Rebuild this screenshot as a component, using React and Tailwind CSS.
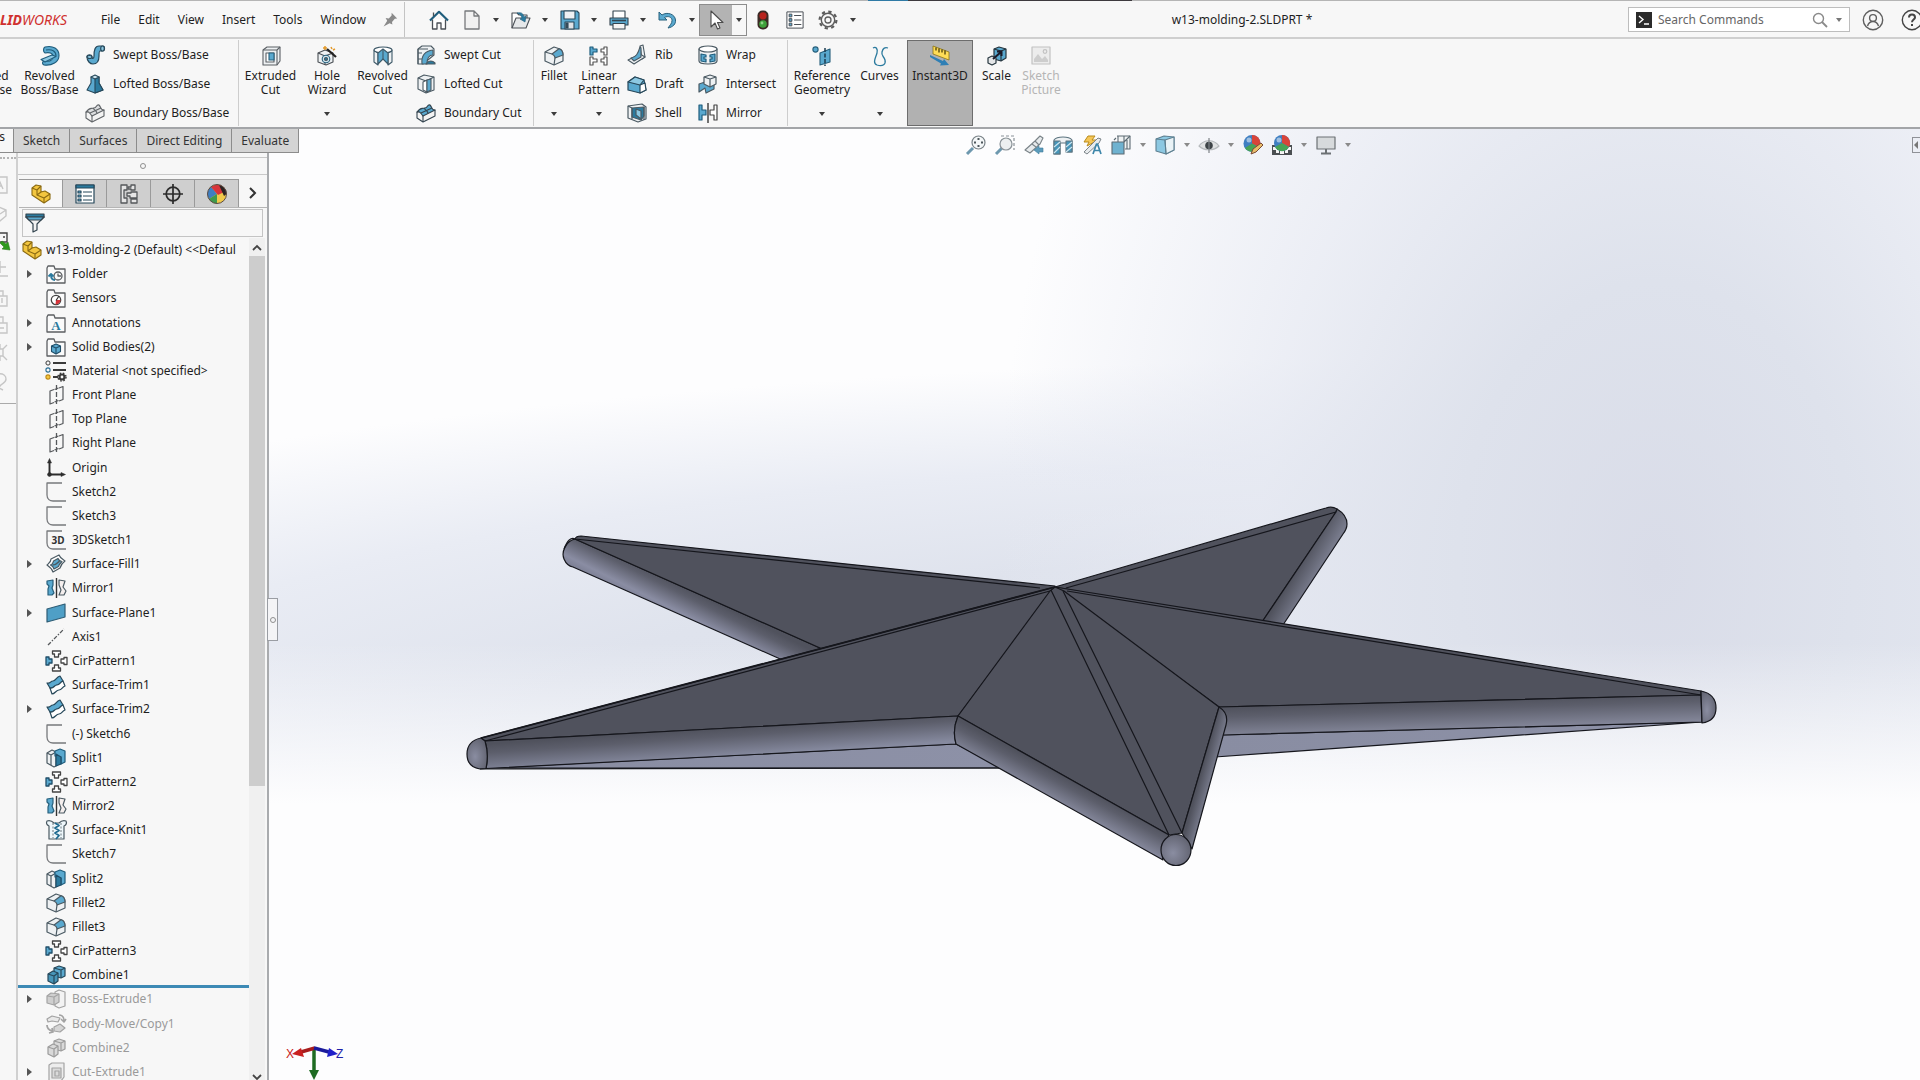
import clsx from "clsx";

const ink = "#4a4f55";
const blue = "#5aa9cf";
const deep = "#2b7a9e";
const pale = "#eef1f3";

// Every glyph is drawn on a 20x20 grid
const glyphs = {
    home: (
        <g fill="none" stroke={ink} strokeWidth="1.3">
            <path d="M3.5 9.5V19h4.5v-6h4v6h4.5V9.5" fill="#fff" />
            <path d="M1 10.5 10 1.8l9 8.7" stroke="#1f5d7c" strokeWidth="2.2" />
            <path d="M4.5 6V2.5" />
        </g>
    ),
    page: <path d="M3 1h9l5 5v13H3zM12 1v5h5" fill="#f1f1f1" stroke="#77797c" strokeWidth="1.3" />,
    open: (
        <g stroke={ink} strokeWidth="1.1">
            <path d="M1 18V3h5l2 2h8v4" fill="#fff" />
            <path d="M1 18 5 8h14l-4 10z" fill="#e6e8ea" />
            <path d="M6 3c4-1 6 0 7 4l2-1-1 6-5-3 2-1c-1-3-2-4-5-5z" fill={deep} stroke="#1f5d7c" strokeWidth=".6" />
        </g>
    ),
    save: (
        <g stroke="#27485a" strokeWidth="1.1">
            <path d="M1 1h16l2 2v16H1z" fill={blue} />
            <path d="M4 1h11v8H4z" fill="#eef1f3" />
            <path d="M5 12h9v7H5z" fill="#dfe3e6" />
            <path d="M6 13h2v5H6z" fill={ink} />
        </g>
    ),
    print: (
        <g stroke="#33444f" strokeWidth="1.1">
            <path d="M4 8V1h12v7" fill="#fff" />
            <path d="M1 8h18v7H1z" fill={blue} />
            <path d="M3 10.5h14" strokeWidth="1.6" />
            <path d="M4 13.5h12V19H4z" fill="#f4f4f4" />
        </g>
    ),
    undo: <path d="M1 2v8h8L6.500 7.500C10 5.500 14 7 14 10.500c0 3-2 4.500-4 7.500 5-1 8-4 7.500-8C17 4 9 1.500 4 5z" fill={blue} stroke="#27607c" strokeWidth="1" />,
    cursor: <path d="M5 1v16l4-4 2.500 6 2.500-1-2.500-5.500H17z" fill="#fff" stroke="#4c4c4c" strokeWidth="1.1" />,
    traffic: (
        <g>
            <rect x="4.500" y=".5" width="11" height="19" rx="5" fill="#3b2a25" />
            <circle cx="10" cy="5.800" r="3.600" fill="#b8231d" />
            <circle cx="10" cy="14" r="3.800" fill="#3fa03a" />
            <circle cx="9" cy="13" r="1.400" fill="#8fd487" />
        </g>
    ),
    options: (
        <g fill={blue} stroke={ink} strokeWidth="1.1">
            <rect x="1" y="1" width="18" height="18" fill="#fff" />
            <path d="M3.500 3.500h3v3h-3zM3.500 8.500h3v3h-3zM3.500 13.500h3v3h-3z" />
            <path d="M9 5h8M9 10h8M9 15h8" />
        </g>
    ),
    gear: (
        <g fill="none" stroke="#5c5c5c">
            <circle cx="10" cy="10" r="3" strokeWidth="1.300" />
            <circle cx="10" cy="10" r="6.700" strokeWidth="1.400" />
            <circle cx="10" cy="10" r="8.400" strokeWidth="2.200" strokeDasharray="3.300 3.300" />
        </g>
    ),
    pin: <path d="M12 1l7 7-3 .5-3.500 4 .5 3-3.500-1.500L2 18l4.500-7-2-3.500 4 .5L12 4.500z" fill="#8a8a8a" />,
    revolved: (
        <g stroke="#1f5d7c" strokeWidth="1.100" fill={blue}>
            <path d="M5 1c8-2 14 2 14 8.500S12 20 4 19c-2-1-2-3 0-4 6 1 9-1 9-4.500S9 6 5 7C3 6 3 2 5 1z" />
            <path d="M1 13.500L12 9l4 1.500L5 16z" fill="#8cc8e2" />
            <path d="M6 4c6-1 10 1 10 6" fill="none" />
        </g>
    ),
    sweep: (
        <g fill={blue} stroke="#27485a" strokeWidth="1.200">
            <path d="M2 12c0-3 5-3 5 0 0 2 2 2 2-1C9 5 10 1 14 1h4c2 0 2 5 0 5h-3c-1 0-1 2-1 5 0 6-3 8-6 8s-6-3-6-7z" />
            <ellipse cx="17.500" cy="3.500" rx="1.800" ry="2.500" fill="#8cc8e2" />
            <ellipse cx="4.500" cy="12" rx="2.500" ry="1.500" fill="#8cc8e2" />
        </g>
    ),
    loft: (
        <g fill={deep} stroke="#27485a" strokeWidth="1.100">
            <path d="M6 3v6L2 16l8 3 8-3-4-7V3z" fill={blue} />
            <path d="M10 5v14l8-3-4-7V3z" />
            <path d="M6 3l4-2 4 2-4 2z" fill="#cfe6f0" />
        </g>
    ),
    boundary: (
        <g fill="#f3f3f3" stroke="#606468" strokeWidth="1.100">
            <path d="M1 9v6l6 4 12-6V7z" />
            <path d="M1 9c3-2 4 2 6 4l12-6c-3 1-3-3-5-5C11 1 12 5 9 5 5 6 5 4 1 9z" fill="#dcdee0" />
            <path d="M7 13v6M5 10l11-5M8 5c1 2 3 2 4 5" fill="none" />
        </g>
    ),
    boundaryCut: (
        <g fill="#f3f3f3" stroke="#33444f" strokeWidth="1.100">
            <path d="M1 9v6l6 4 12-6V7z" />
            <path d="M1 9c3-2 4 2 6 4l12-6c-3 1-3-3-5-5C11 1 12 5 9 5 5 6 5 4 1 9z" fill={blue} />
            <path d="M7 13v6M5 10l11-5M8 5c1 2 3 2 4 5" fill="none" />
        </g>
    ),
    extrudedCut: (
        <g fill={pale} stroke="#5b6065" strokeWidth="1.100">
            <path d="M2 4l4-3h13v14l-3 4H2z" />
            <path d="M2 4h14v15M16 4l3-3" fill="none" />
            <path d="M5 7h8v9H5z" fill="#fff" />
            <path d="M8 7h5v7H8z" fill={blue} stroke="#27607c" />
        </g>
    ),
    holeWizard: (
        <g stroke="#4b5055" strokeWidth="1.100">
            <path d="M1 7l7-3 8 3v9l-7 3-8-3z" fill={pale} />
            <path d="M1 7l7 3 8-3M8 10v9" fill="none" />
            <circle cx="9" cy="13" r="3.800" fill="#cfe6f0" stroke="#27607c" />
            <circle cx="9" cy="13" r="1.500" fill={deep} />
            <path d="M10 3l9 8" stroke="#222" strokeWidth="2.200" />
            <path d="M8 0v4M6 2h4M14 1l1 2M18 3l-2 1" stroke="#e39a2b" strokeWidth="1.500" />
        </g>
    ),
    revolvedCut: (
        <g stroke="#3f5a69" strokeWidth="1.100">
            <path d="M1 4v12l4 3V7zM19 4v12l-4 3V7z" fill={pale} />
            <ellipse cx="10" cy="4" rx="9" ry="3" fill="#fff" />
            <path d="M5 7l5-4 5 4v11l-5-5-5 5z" fill={blue} />
            <path d="M10 3v10" />
        </g>
    ),
    sweptCut: (
        <g stroke="#4b5a63" strokeWidth="1.100">
            <path d="M2 4l4-3h9l3 3v6L7 19H2z" fill={pale} />
            <path d="M6 19C5 10 9 6 17 5v5c-4 0-6 3-6 9z" fill={blue} />
            <path d="M2 4h10M2 4v15M2 8h4M2 14h4" fill="none" />
            <path d="M10 19c1-2 5-5 9-1v1z" fill={deep} />
        </g>
    ),
    loftedCut: (
        <g stroke="#4b5a63" strokeWidth="1.100">
            <path d="M2 4l6-3 10 2v13l-8 3-8-4z" fill={pale} />
            <path d="M2 4l8 3 8-4M10 7v12" fill="none" />
            <path d="M7 8l4-2v12l-4-2z" fill="#fff" />
            <path d="M11 6l4-1v11l-4 2z" fill={blue} />
        </g>
    ),
    fillet: (
        <g stroke="#4b5a63" strokeWidth="1.200">
            <path d="M1 6l9-5 6 2c2 1 3 3 3 6v6l-9 4-9-4z" fill={pale} />
            <path d="M8 8l7-5.300c3 1 4 3 4 6.300l-8 3c0-2-1-3-3-4z" fill={blue} />
            <path d="M1 6l7 2M11 12l-1 7" fill="none" />
        </g>
    ),
    linear: (
        <g fill="#fff" stroke="#555" strokeWidth="1.200">
            <path d="M1 1h3v2h4v3H4v3H1z" fill={blue} stroke="#1f5d7c" />
            <path d="M18 1h-3v2h-3v3h3v3h3zM1 11h3v2h4v3H4v3H1zM18 11h-3v2h-3v3h3v3h3z" />
        </g>
    ),
    rib: (
        <g stroke="#4b5a63" strokeWidth="1.100">
            <path d="M13 1l3-1 2 12-3 2z" fill={pale} />
            <path d="M1 15l12-6 5 3-11 7z" fill={pale} />
            <path d="M4 13C9 12 11 9 13 2l1 1v9l-7 4z" fill={blue} />
        </g>
    ),
    draft: (
        <g stroke="#27485a" strokeWidth="1.200">
            <path d="M1 8l7-5 9 3 2 10-6 3-12-3z" fill={blue} />
            <path d="M13 11l5-2 1 7-6 3z" fill="#fff" />
            <path d="M1 8l7-5 9 3-4 5z" fill="#8cc8e2" />
        </g>
    ),
    shell: (
        <g stroke="#4b5a63" strokeWidth="1.200">
            <path d="M1 3l14-2 4 3v12l-8 3-10-4z" fill={pale} />
            <path d="M5 5l12-1v9l-3 4-9-3z" fill="#2b7a9e" />
            <path d="M9 6l5 2v8l-5-4z" fill="#8cc8e2" />
            <path d="M1 3l4 2v11M17 4v13" fill="none" />
        </g>
    ),
    wrap: (
        <g stroke="#4b5a63" strokeWidth="1.200">
            <path d="M1 4v12c0 4 18 4 18 0V4z" fill={pale} />
            <ellipse cx="10" cy="4" rx="9" ry="3" fill="#fff" />
            <path d="M3 9l5 1v2H6v2h2v3l-5-1zM17 9l-5 1v2h2v2h-2v3l5-1z" fill={blue} stroke="#1f5d7c" />
        </g>
    ),
    intersect: (
        <g stroke="#4b5a63" strokeWidth="1.200">
            <path d="M1 10l6-2 9 2v5l-8 4-1-5-6 4z" fill={blue} />
            <path d="M6 3l6-2 6 2v7l-6 3-6-3z" fill={pale} />
            <path d="M6 3l6 2 6-2M12 5v8" fill="none" />
        </g>
    ),
    mirror: (
        <g stroke="#444" strokeWidth="1.200">
            <path d="M1 2h3v5h4v5H4v5H1z" fill={blue} stroke="#1f5d7c" />
            <path d="M19 2h-3v5h-4v5h4v5h3z" fill="#fff" />
            <path d="M10 0v20" strokeWidth="1.500" />
        </g>
    ),
    refGeometry: (
        <g stroke="#27607c" strokeWidth="1.100">
            <circle cx="3.500" cy="3.500" r="2.600" fill={blue} />
            <path d="M8 7l10-4v13L8 19z" fill={blue} />
            <path d="M13 2v18" stroke="#1d3d50" strokeWidth="1.500" strokeDasharray="4 1.500" />
        </g>
    ),
    curves: <path d="M3 2c3-2 5 1 4 5s-5 10 0 12c6 2 9-1 8-5s-4-4-3-8 3-5 6-4" fill="none" stroke={deep} strokeWidth="1.300" />,
    instant: (
        <g>
            <path d="M3 0l16 6v8L3 8z" fill="#ffdd57" stroke="#8b7414" strokeWidth=".8" />
            <path d="M6 1.500v3M9 2.500v4M12 3.500v3M15 4.500v4" stroke="#3a3000" strokeWidth="1.200" />
            <path d="M0 9l13 6 1-2 5 6-9 .5 1-2L0 11z" fill="#2f7fb5" />
        </g>
    ),
    scale: (
        <g stroke="#27363f" strokeWidth="1.200">
            <path d="M7 3l5-2 7 2v9l-5 3-7-2z" fill={blue} />
            <path d="M7 3l7 2 5-2M14 5v10" fill="none" />
            <path d="M1 12l4-2 4 2v5l-4 2-4-2z" fill="#e4e6e8" />
            <path d="M6 13l8-7M10 5.500h4.500V10" stroke="#1b1b2a" strokeWidth="2" fill="none" />
        </g>
    ),
    picture: (
        <g fill="none" stroke="#c2c2c2" strokeWidth="1.200">
            <path d="M1 1h18v17H1z" fill="#ececec" />
            <path d="M3 13l4-5 4 5 3-3 3 4v2H3z" fill="#cdcdcd" stroke="none" />
            <circle cx="14" cy="5.500" r="1.800" />
        </g>
    ),
    zoomFit: (
        <g stroke="#7a8388" strokeWidth="1.200">
            <path d="M1 19l6-6" stroke="#6d98ae" strokeWidth="3" />
            <circle cx="12.500" cy="7.500" r="6.500" fill="#f4f7f8" />
            <path d="M12.500 3v2M12.500 10v2M8 7.500h2M15 7.500h2" strokeWidth="2" stroke="#4d565b" />
        </g>
    ),
    zoomArea: (
        <g stroke="#8a9297" strokeWidth="1.200">
            <path d="M6 1h13v14" fill="none" strokeDasharray="3 2" />
            <path d="M1 19l6-6" stroke="#6d98ae" strokeWidth="3" />
            <circle cx="11" cy="9" r="6" fill="#eceff0" />
        </g>
    ),
    prevView: (
        <g stroke="#7a8388" strokeWidth="1.100">
            <path d="M1 15l10-9 5-5 3 2-3 6-10 9z" fill="#e8ebed" />
            <path d="M11 6l4 4M8 9l4 3" />
            <path d="M19 13h-4v-2l-5 4 5 4v-2h4z" fill="#5b9bbb" stroke="#3f7d9c" strokeWidth=".6" />
        </g>
    ),
    section: (
        <g stroke="#5d7580" strokeWidth="1.100">
            <path d="M1 5c3-4 15-4 18 0v12h-5V8H7v11H1z" fill="#eef1f3" />
            <path d="M1 6h6v13H1zM13 6h6v11h-6z" fill="#4795b8" />
            <path d="M1 12l6-5M1 18l6-6M13 12l6-5M13 17l6-5" stroke="#cfe6f0" />
        </g>
    ),
    dynamic: (
        <g stroke="#7d858a" strokeWidth="1">
            <path d="M6 1h7l-3 4h6L5 11l2-4H2z" fill="#f5c657" stroke="#b98b1c" />
            <path d="M2 17L16 3l3 1-2 4L5 19z" fill="#e8ebed" />
            <path d="M11 19l3.500-10h1L19 19M12.500 15.500h5" fill="none" stroke="#3d86aa" strokeWidth="1.700" />
        </g>
    ),
    orient: (
        <g stroke="#5d6b73" strokeWidth="1.100">
            <path d="M6 1h13v13h-5" fill="#f0f3f4" />
            <path d="M1 7h12v12H1z" fill="#6fb2d0" />
            <path d="M13 7l6-6M13 1v6M16 14v-9M7 1v6M3 5l2-2" fill="none" />
        </g>
    ),
    display: (
        <g stroke="#5d7f90" strokeWidth="1.100">
            <path d="M1 4l8-3 10 1v13l-8 4-10-3z" fill="#8cc8e2" />
            <path d="M10 5l9-3v13l-8 4z" fill="#e9f2f6" />
            <path d="M1 4l9 1 1 14" fill="none" />
        </g>
    ),
    eye: (
        <g>
            <path d="M0 11C5 4 15 4 20 11 15 16 5 16 0 11z" fill="#e0e2e3" stroke="#b5b9bc" strokeWidth="1.200" />
            <circle cx="10" cy="10.500" r="3.800" fill="#3e4448" />
            <path d="M10 3v15" stroke="#7d8286" strokeWidth="1.200" />
        </g>
    ),
    appearance: (
        <g>
            <circle cx="9" cy="8.500" r="8.500" fill="#3f7fc1" />
            <path d="M9 8.500L9 0a8.500 8.500 0 0 1 7.500 12.500z" fill="#d8443a" />
            <path d="M9 8.500l7.500 4A8.500 8.500 0 0 1 2 13z" fill="#48a356" />
            <circle cx="6" cy="5" r="2.500" fill="#ffffff" opacity=".5" />
            <path d="M8 19l2-5 8-6 2 2-7 7z" fill="#e9bd6a" stroke="#7a4a33" strokeWidth="1" />
        </g>
    ),
    scene: (
        <g>
            <path d="M0 10h20v10H0z" fill="#4b4f52" />
            <path d="M1 12h4v3H1zM8 16h4v3H8zM15 12h4v3h-4zM4 15h3v3H4zM13 15h3v3h-3z" fill="#f4f4f4" />
            <circle cx="10" cy="8" r="8" fill="#3f7fc1" />
            <path d="M10 8V0a8 8 0 0 1 7 12z" fill="#d8443a" />
            <path d="M10 8l7 4a8 8 0 0 1-14 0z" fill="#48a356" />
            <circle cx="7" cy="5" r="2.500" fill="#fff" opacity=".5" />
        </g>
    ),
    monitor: (
        <g stroke="#6c7174" strokeWidth="1.200">
            <path d="M1 2h18v12H1z" fill="#d7dadc" />
            <path d="M10 14v4M5 18.500h10" strokeWidth="2" />
        </g>
    ),
    part: (
        <g fill="#f3c63f" stroke="#8a6a12" strokeWidth="1.100">
            <path d="M1 4l4-3 5 1v6l4-1 5 3v5l-6 4-12-8z" />
            <path d="M1 4l5 2 4-4M6 6v5l7 3 6-4M13 14v5M10 8l-4 3" fill="none" />
        </g>
    ),
    property: (
        <g stroke="#27485a" strokeWidth="1.200">
            <path d="M1 1h18v18H1z" fill="#fff" />
            <path d="M1 1h18v3H1z" fill={deep} />
            <path d="M3 7h3v2H3zM3 11h3v2H3zM3 15h3v2H3z" fill={blue} />
            <path d="M8 8h9M8 12h9M8 16h9" />
        </g>
    ),
    config: (
        <g fill="#e6e6e6" stroke="#55585b" strokeWidth="1.300">
            <path d="M2 1h6v5H5v8h3v5H2z" />
            <path d="M9 3h3V1h4v5h-4V5H9zM8 9h4V8h6v6h-7v-2H8zM12 15h6v4h-6z" />
        </g>
    ),
    target: (
        <g fill="none" stroke="#2c2c2c" strokeWidth="1.700">
            <circle cx="10" cy="10" r="6.800" />
            <path d="M10 0v20M0 10h20" />
        </g>
    ),
    ball: (
        <g>
            <circle cx="10" cy="10" r="9.500" fill="#f0c94a" />
            <path d="M10 10L2 15A9.500 9.500 0 0 1 4 2.500z" fill="#3f7fc1" />
            <path d="M10 10L2 15a9.500 9.500 0 0 0 8 4.500z" fill="#3e9a4c" />
            <path d="M11 11L4 3C9-1 16 0 19 7z" fill="#d8343a" />
            <path d="M12 1c5 1 8 5 7.500 9L17 12z" fill="#2b2323" />
            <circle cx="10" cy="10" r="9.500" fill="none" stroke="#5a4a44" />
        </g>
    ),
    funnel: (
        <g stroke="#33444f" strokeWidth="1.200">
            <path d="M1 4l7 7v8l4-2v-6l7-7z" fill="#f2f2f2" />
            <path d="M1 1h18v3H1z" fill={deep} />
            <path d="M1 4h18l-3 3H4z" fill={blue} />
        </g>
    ),
    folder: <path d="M1 19V4l1-2h6l1 3h10v14z" fill="#fafafa" stroke="#5c5f62" strokeWidth="1.300" />,
    history: (
        <g fill="none" stroke={deep} strokeWidth="1.300">
            <circle cx="12" cy="12" r="4" stroke="#5c5f62" />
            <path d="M12 9.500V12h3" stroke="#5c5f62" />
            <path d="M9 16c-3 0-4-2-4-5M2.500 12.500L5 10l2.500 2.500" strokeWidth="1.800" />
        </g>
    ),
    sensor: (
        <g>
            <circle cx="10" cy="12" r="4.700" fill="#fff" stroke="#444" strokeWidth="1.300" />
            <path d="M10 12h4.500a4.500 4.500 0 0 1-5 4.500z" fill="#d8343a" />
            <path d="M10 12.500l3-4.500" stroke="#333" strokeWidth="1.200" />
        </g>
    ),
    bodies: (
        <g fill={blue} stroke="#1f4d68" strokeWidth="1.100">
            <path d="M5.500 9L10 7l4.500 2v5.500L10 17l-4.500-2.500z" />
            <path d="M5.500 9l4.500 2 4.500-2M10 11v6" fill="none" />
        </g>
    ),
    material: (
        <g fill="none" stroke="#3a3a3a" strokeWidth="1.500">
            <path d="M7 2h13M7 9h13M7 16h5" strokeWidth="1.800" />
            <circle cx="2" cy="2" r="2.100" strokeWidth="1" />
            <circle cx="2" cy="9" r="2.100" strokeWidth="1.100" stroke="#2b6f96" />
            <circle cx="2" cy="16" r="2.100" strokeWidth="1.100" stroke="#c08a14" fill="#f3c63f" />
            <circle cx="16" cy="16" r="2.500" strokeWidth="2.200" />
            <circle cx="16" cy="16" r="4" strokeWidth="1.400" strokeDasharray="1.600 1.600" />
        </g>
    ),
    plane: (
        <g fill="none" stroke="#55585b" strokeWidth="1.200">
            <path d="M8 4.500l-4 1.500v13l4-1.500M13 3l4-1.500v13L13 16" />
            <path d="M10.500 0v5M10.500 7v5M10.500 14v5M8.500 4.500l4-1.500M8.500 17l4-1.500" strokeWidth="1.300" />
        </g>
    ),
    origin: (
        <g stroke="#2c2c2c" fill="#2c2c2c">
            <path d="M3.500 4v12.500H16" fill="none" strokeWidth="1.900" />
            <path d="M1.500 5l2-4.500 2 4.500zM15 14.500l4.500 2-4.500 2z" strokeWidth=".5" />
            <circle cx="3.500" cy="16.500" r="1.800" />
        </g>
    ),
    sketch: <path d="M16 1H1v12c0 4 3 6 6 6h13" fill="none" stroke="#77797c" strokeWidth="1.300" />,
    fill: (
        <g stroke="#4b5a63" strokeWidth="1.200">
            <path d="M1 11c2-2 4-3 4-6l8-4c1 3 3 4 6 6-3 2-4 4-5 7l-7 4c-1-3-3-5-6-7z" fill="#fff" />
            <path d="M4.500 11C7 10 7 9 7.500 7l4.500-2.500c1 2 2 3 4 3-2 2-3 3-3.500 5L8 15c-.5-2-1.500-3-3.500-4z" fill={blue} />
            <path d="M6.500 11c4 0 5-2 7-4" fill="none" strokeWidth="1.500" />
        </g>
    ),
    mirrorBody: (
        <g stroke="#4b5a63" strokeWidth="1.200">
            <path d="M1 3l6-1v5l-1 3 2 5-2 2H2v-6l1-3-2-2z" fill={blue} stroke="#27607c" />
            <path d="M13 2l6 1-1 3-1 3 3 4-2 4h-5l2-5-2-5z" fill="#f5efee" />
            <path d="M10.500 0v20" stroke="#333" strokeWidth="1.400" />
        </g>
    ),
    surface: <path d="M1 6l18-5v13L1 19z" fill="#4f9fc6" stroke="#2f5d75" strokeWidth="1.200" />,
    axis: <path d="M2 18L18 2" fill="none" stroke="#55585b" strokeWidth="1.300" strokeDasharray="4 1.500 1.500 1.500" />,
    circular: (
        <g fill="#fff" stroke="#444" strokeWidth="1.300">
            <path d="M6.500 0h8v3h-2v3h-4V3h-2zM6.500 20h8v-3h-2v-3h-4v3h-2zM21 6.500h-3v1.500h-3v4h3v1.500h3z" />
            <path d="M0 6h3v2h3v4H3v2H0z" fill={blue} stroke="#1f4d68" />
        </g>
    ),
    trim: (
        <g stroke="#27485a" strokeWidth="1.200">
            <path d="M1 8c4 1 3-2 6-2s3-4 7-5l3 5c-3 1-3 4-6 4s-4 4-7 3z" fill={blue} />
            <path d="M4 13c4 1 4-3 7-3s3-3 6-4l2 5c-3 1-3 4-6 4s-4 4-7 4z" fill="#fff" />
        </g>
    ),
    split: (
        <g stroke="#4b5a63" strokeWidth="1.200">
            <path d="M1 5l5-3 4 2v14l-2 1-7-4z" fill={pale} />
            <path d="M1 5l4 2v10M5 7l5-3" fill="none" />
            <path d="M9 3l5-2 5 2v11l-4 2V9l-6-1z" fill={blue} stroke="#1f5d7c" />
            <path d="M10 6l5 3v7l-5 2z" fill={deep} stroke="#1f4d68" />
        </g>
    ),
    knit: (
        <g stroke="#4b5a63" strokeWidth="1.200">
            <path d="M1 1c3-1 5 0 7 2h5c2-2 4-3 7-2 1 2 0 4-2 5v13H3V6C1 5 0 3 1 1z" fill="#eef7fb" />
            <path d="M9 3l4 2.500L9 8l4 2.500L9 13l4 2.500L10 19" fill="none" stroke="#1f6b90" strokeWidth="1.800" />
            <path d="M7 3v15M15 3v15" strokeDasharray="2 1.500" strokeWidth=".8" />
        </g>
    ),
    combine: (
        <g fill={blue} stroke="#27485a" strokeWidth="1.200">
            <path d="M8 3l5-2 6 2v8l-4 2-7-2z" />
            <path d="M2 9l5-3 5 2v8l-4 3-6-3z" fill="#4795b8" />
            <path d="M2 9l6 2 4-3M8 11v8M8 3l7 2 4-2M15 5v8" fill="none" />
        </g>
    ),
    extrudeOff: (
        <g fill="#e4e4e4" stroke="#a3a3a3" strokeWidth="1.200">
            <path d="M9 3l4-2 6 2v14l-6 2-4-2z" fill="#f3f3f3" />
            <path d="M1 7l4-3 8 1v8l-5 3-7-2z" fill="#cfcfcf" />
            <path d="M1 7l7 1 5-3M8 8v8" fill="none" />
        </g>
    ),
    moveOff: (
        <g fill="#e9e9e9" stroke="#a3a3a3" strokeWidth="1.200">
            <path d="M1 5l5-3 8 2-2 4-6-1-4 1z" />
            <path d="M13 1c3 0 5 2 5 6M15 5l3 3 2-3" fill="none" strokeWidth="1.600" />
            <path d="M8 13l6-3 5 4-5 4-6-1z" fill="#d5d5d5" />
            <path d="M1 11c0 3 2 5 5 6M3 19l4-1-1-4" fill="none" strokeWidth="1.800" />
        </g>
    ),
    combineOff: (
        <g fill="#d9d9d9" stroke="#9c9c9c" strokeWidth="1.200">
            <path d="M8 3l5-2 6 2v8l-4 2-7-2z" />
            <path d="M2 9l5-3 5 2v8l-4 3-6-3z" />
            <path d="M2 9l6 2 4-3M8 11v8M8 3l7 2 4-2M15 5v8" fill="none" />
        </g>
    ),
    cutOff: (
        <g fill="#ededed" stroke="#a3a3a3" strokeWidth="1.200">
            <path d="M3 3l3-2h12v14l-3 4H3z" />
            <path d="M6 6h9v10H6zM9 9h4v5H9z" fill="#dadada" />
        </g>
    ),
    stamp: <path d="M1 2h16v16H1zM5 14l4-9 4 9M6 11h6" />,
    spray: <path d="M2 8l7-4 7 3v6l-6 5-8-3zM9 4v6M16 7l-6 4" />,
    stampPlus: <path d="M10 2v12M4 8h12M1 17h17" />,
    clip: <path d="M5 9V4h8v5M7 9h10v10H7zM12 11v5" />,
    tray: <path d="M4 8V2h9v6M1 8h16v10H1zM5 13h9" />,
    nodes: <path d="M6 6h7v7H6zM2 2l4 4M17 2l-4 4M2 17l4-4M17 17l-4-4M10 1v5M10 13v5" />,
    loop: <path d="M4 8c0-7 12-7 12 0 0 5-6 4-7 9M9 17l-4-3M9 17l4 2" />,
};

const Icon = ({ name, className = "size-5" }) => (
    <svg viewBox="0 0 20 20" className={clsx("shrink-0 overflow-visible", className)} strokeLinejoin="round" aria-hidden="true">
        {glyphs[name]}
    </svg>
);

const Caret = ({ className = "text-[#3c3c3c]" }) => (
    <svg viewBox="0 0 6 4" className={clsx("h-1 w-[6px] shrink-0", className)} aria-hidden="true">
        <path d="M0 0h6L3 4z" fill="currentColor" />
    </svg>
);

const menus = ["File", "Edit", "View", "Insert", "Tools", "Window"];

const TitleBar = () => (
    <header className="relative flex h-[39px] shrink-0 items-center border-t border-b-2 border-t-[#b5b5b5] border-b-[#cfcfcf] bg-[#f7f7f7] pt-px">
        <div className="absolute -top-px left-[868px] flex h-px w-[264px] bg-[#3d3a3e]">
            <div className="w-10 bg-[#2f7aa5]"></div>
        </div>
        <div className="flex w-[67px] shrink-0 justify-end overflow-hidden text-sm text-[#d0312f] italic">
            <span className="font-bold">SOLID</span>
            <span>WORKS</span>
        </div>
        <nav className="ml-[34px] flex items-center gap-[18px]">
            {menus.map((item) => (
                <button key={item} type="button">{item}</button>
            ))}
        </nav>
        <button type="button" aria-label="Pin menu" className="ml-4"><Icon name="pin" className="size-4" /></button>
        <div className="ml-1.5 h-full w-px bg-[#c4c4c4]"></div>

        {/* Quick access tools */}
        <div className="ml-6 flex h-full items-center">
            <button type="button" aria-label="Home" className="mr-[13px]"><Icon name="home" /></button>
            {[["page", "New"], ["open", "Open"], ["save", "Save"], ["print", "Print"], ["undo", "Undo"]].map(([icon, label]) => (
                <button key={icon} type="button" aria-label={label} className="mr-3 flex items-center gap-[11px]">
                    <Icon name={icon} />
                    <Caret />
                </button>
            ))}
            <div className="-ml-2 flex h-8 border border-[#8c8c8c]">
                <button type="button" aria-label="Select" className="flex w-8 items-center justify-center bg-[#b3b3b3]"><Icon name="cursor" /></button>
                <button type="button" aria-label="Select options" className="flex w-3.5 items-center justify-center"><Caret /></button>
            </div>
            <button type="button" aria-label="Rebuild" className="ml-1.5"><Icon name="traffic" /></button>
            <button type="button" aria-label="File properties" className="ml-[13px]"><Icon name="options" className="size-[18px]" /></button>
            <button type="button" aria-label="Options" className="ml-[14px] flex items-center gap-[12px]">
                <Icon name="gear" />
                <Caret />
            </button>
        </div>

        <div className="flex-1 text-center">w13-molding-2.SLDPRT *</div>

        <div className="flex h-[25px] w-[222px] shrink-0 items-center border border-[#bdbdbd] bg-white px-[7px]">
            <svg viewBox="0 0 16 16" className="size-4 shrink-0" aria-hidden="true">
                <path d="M0 0h16v16H0z" fill="#2b2b2b" />
                <path d="M3 4l4 3.500L3 11M8 12h5" fill="none" stroke="#fff" strokeWidth="1.400" />
            </svg>
            <input aria-label="Search Commands" placeholder="Search Commands" className="ml-1.5 w-0 flex-1 bg-transparent outline-none placeholder:text-[#666]" />
            <button type="button" aria-label="Search" className="flex items-center gap-2">
                <svg viewBox="0 0 16 16" className="size-4" fill="none" stroke="#8a8a8a" strokeWidth="1.400" aria-hidden="true">
                    <circle cx="6.500" cy="6.500" r="5" />
                    <path d="M10 10l5 5" strokeWidth="1.800" />
                </svg>
                <Caret className="text-[#777]" />
            </button>
        </div>
        <button type="button" aria-label="Account" className="ml-3 shrink-0">
            <svg viewBox="0 0 22 22" className="size-[22px]" fill="none" stroke="#5f5f5f" strokeWidth="1.400" aria-hidden="true">
                <circle cx="11" cy="11" r="9.700" />
                <circle cx="11" cy="9" r="3.400" />
                <path d="M5.500 17c1-3 3-4.500 5.500-4.500s4.500 1.500 5.500 4.500" />
            </svg>
        </button>
        <button type="button" aria-label="Help" className="-mr-[3px] ml-[17px] shrink-0">
            <svg viewBox="0 0 22 22" className="size-[22px]" fill="none" stroke="#444" strokeWidth="1.400" aria-hidden="true">
                <circle cx="11" cy="11" r="9.700" />
                <path d="M8 8.500c0-4 6-4 6 0 0 2-3 2.300-3 4.800M11 15v2" strokeWidth="2" />
            </svg>
        </button>
    </header>
);

const BigButton = ({ icon, label, className, drop, active, disabled }) => (
    <button
        type="button"
        disabled={disabled}
        aria-pressed={active}
        className={clsx(
            "flex shrink-0 flex-col items-center border pt-[5px] leading-[14px]",
            active ? "border-[#6d6d6d] bg-[#b1b1b1]" : "border-transparent",
            disabled && "text-[#b5b5b5]",
            className
        )}
    >
        <Icon name={icon} />
        <span className="mt-[3px] h-[28px] text-center whitespace-pre">{label}</span>
        {drop && <span className="mt-[15px]"><Caret /></span>}
    </button>
);

const SmallButtons = ({ items, className }) => (
    <div className={clsx("flex shrink-0 flex-col", className)}>
        {items.map(([icon, label]) => (
            <button key={label} type="button" className="flex h-[29px] items-center gap-2 whitespace-nowrap">
                <Icon name={icon} />
                {label}
            </button>
        ))}
    </div>
);

const Divider = () => <div className="h-[86px] w-px shrink-0 bg-[#cdcdcd]"></div>;

const Ribbon = () => (
    <div className="flex h-[90px] shrink-0 border-b-2 border-[#a3a5a8] bg-[#f7f7f7] pt-px">
        <div className="flex w-[17px] shrink-0 justify-end pr-[7px]">
            <BigButton icon="revolved" label={"Extruded\nBoss/Base"} className="w-[54px]" />
        </div>
        <BigButton icon="revolved" label={"Revolved\nBoss/Base"} className="w-[65px]" />
        <SmallButtons
            className="ml-[3px] w-[153px]"
            items={[["sweep", "Swept Boss/Base"], ["loft", "Lofted Boss/Base"], ["boundary", "Boundary Boss/Base"]]}
        />
        <Divider />
        <BigButton icon="extrudedCut" label={"Extruded\nCut"} className="w-[63px]" />
        <BigButton icon="holeWizard" label={"Hole\nWizard"} drop className="w-[50px]" />
        <BigButton icon="revolvedCut" label={"Revolved\nCut"} className="w-[61px]" />
        <SmallButtons
            className="ml-[3px] w-[117px]"
            items={[["sweptCut", "Swept Cut"], ["loftedCut", "Lofted Cut"], ["boundaryCut", "Boundary Cut"]]}
        />
        <Divider />
        <BigButton icon="fillet" label={"Fillet\n "} drop className="w-[40px]" />
        <BigButton icon="linear" label={"Linear\nPattern"} drop className="w-[50px]" />
        <SmallButtons className="ml-[3px] w-[71px]" items={[["rib", "Rib"], ["draft", "Draft"], ["shell", "Shell"]]} />
        <SmallButtons className="w-[89px]" items={[["wrap", "Wrap"], ["intersect", "Intersect"], ["mirror", "Mirror"]]} />
        <Divider />
        <BigButton icon="refGeometry" label={"Reference\nGeometry"} drop className="w-[68px]" />
        <BigButton icon="curves" label={"Curves\n "} drop className="w-[47px]" />
        <BigButton icon="instant" label="Instant3D" active className="ml-[4px] h-[86px] w-[66px]" />
        <BigButton icon="scale" label="Scale" className="ml-[2px] w-[43px]" />
        <BigButton icon="picture" label={"Sketch\nPicture"} disabled className="w-[46px]" />
    </div>
);

const FeatureTabs = () => (
    <div className="flex h-[24px] border-b border-[#8c8c8c]">
        <button type="button" className="flex w-[14px] shrink-0 justify-end overflow-hidden border-r border-[#8c8c8c] bg-[#f7f7f7] pr-2">Features</button>
        {["Sketch", "Surfaces", "Direct Editing", "Evaluate"].map((tab) => (
            <button key={tab} type="button" className="border-r border-[#8c8c8c] bg-[#d4d4d4] px-[9px] text-[#333]">
                {tab}
            </button>
        ))}
    </div>
);

const tree = [
    { icon: "folder", over: "history", label: "Folder", open: true },
    { icon: "folder", over: "sensor", label: "Sensors" },
    { icon: "folder", letter: true, label: "Annotations", open: true },
    { icon: "folder", over: "bodies", label: "Solid Bodies(2)", open: true },
    { icon: "material", label: "Material <not specified>" },
    { icon: "plane", label: "Front Plane" },
    { icon: "plane", label: "Top Plane" },
    { icon: "plane", label: "Right Plane" },
    { icon: "origin", label: "Origin" },
    { icon: "sketch", label: "Sketch2" },
    { icon: "sketch", label: "Sketch3" },
    { icon: "sketch", threeD: true, label: "3DSketch1" },
    { icon: "fill", label: "Surface-Fill1", open: true },
    { icon: "mirrorBody", label: "Mirror1" },
    { icon: "surface", label: "Surface-Plane1", open: true },
    { icon: "axis", label: "Axis1" },
    { icon: "circular", label: "CirPattern1" },
    { icon: "trim", label: "Surface-Trim1" },
    { icon: "trim", label: "Surface-Trim2", open: true },
    { icon: "sketch", label: "(-) Sketch6" },
    { icon: "split", label: "Split1" },
    { icon: "circular", label: "CirPattern2" },
    { icon: "mirrorBody", label: "Mirror2" },
    { icon: "knit", label: "Surface-Knit1" },
    { icon: "sketch", label: "Sketch7" },
    { icon: "split", label: "Split2" },
    { icon: "fillet", label: "Fillet2" },
    { icon: "fillet", label: "Fillet3" },
    { icon: "circular", label: "CirPattern3" },
    { icon: "combine", label: "Combine1", rollback: true },
    { icon: "extrudeOff", label: "Boss-Extrude1", open: true, off: true },
    { icon: "moveOff", label: "Body-Move/Copy1", off: true },
    { icon: "combineOff", label: "Combine2", off: true },
    { icon: "cutOff", label: "Cut-Extrude1", open: true, off: true },
];

const TreeIcon = ({ item }) => (
    <svg viewBox="0 0 20 20" className="size-5 shrink-0 overflow-visible" strokeLinejoin="round" aria-hidden="true">
        {glyphs[item.icon]}
        {item.over && glyphs[item.over]}
        {item.letter && <text x="10" y="17" textAnchor="middle" fontSize="13" fontWeight="bold" fontFamily="Liberation Serif, serif" fill="#2b7a9e">A</text>}
        {item.threeD && <text x="12" y="14" textAnchor="middle" fontSize="10" fontWeight="bold" fontFamily="Noto Sans, sans-serif" fill="#333">3D</text>}
    </svg>
);

const TreeItem = ({ item }) => (
    <li className={clsx("relative flex min-h-0 items-center pl-[9px]", item.off && "text-[#9a9a9a]")}>
        <span className="flex w-[19px] shrink-0">
            {item.open && (
                <svg viewBox="0 0 5 8" className="h-2 w-[5px]" aria-hidden="true"><path d="M0 0l5 4-5 4z" fill="#555" /></svg>
            )}
        </span>
        <TreeIcon item={item} />
        <span className="ml-1.5 whitespace-nowrap">{item.label}</span>
        {item.rollback && <span className="absolute inset-x-0 -bottom-px h-[3px] bg-[#3d8ab5]"></span>}
    </li>
);

const panelTabs = [["part", "Feature tree"], ["property", "Properties"], ["config", "Configurations"], ["target", "Dimensions"], ["ball", "Display"]];

const SidePanel = () => (
    <aside className="flex w-[253px] shrink-0 flex-col border-r-2 border-l-2 border-r-[#a9abae] border-l-[#d0d0d0] bg-[#f7f7f7]">
        <div className="mt-[4px] flex h-[18px] shrink-0 items-center justify-center border-y border-[#c9c9c9]">
            <span className="size-[6px] rounded-full border border-[#8f8f8f]"></span>
        </div>
        <div className="mt-1 ml-px flex h-[29px] shrink-0 items-stretch border-b border-[#b5b5b5]">
            {panelTabs.map(([icon, label], i) => (
                <button
                    key={icon}
                    type="button"
                    aria-label={label}
                    className={clsx(
                        "flex w-[44px] items-center justify-center border-t border-r border-[#9a9a9a]",
                        i > 0 && "bg-[#cfcfcf]"
                    )}
                >
                    <Icon name={icon} />
                </button>
            ))}
            <button type="button" aria-label="More tabs" className="flex flex-1 items-center justify-center">
                <svg viewBox="0 0 8 12" className="h-3 w-2" fill="none" stroke="#333" strokeWidth="2" aria-hidden="true"><path d="M1 1l5 5-5 5" /></svg>
            </button>
        </div>
        <label className="mx-[4px] mt-px flex h-[28px] shrink-0 items-center border border-[#c4c4c4] pl-[2px]">
            <Icon name="funnel" />
            <input aria-label="Filter" className="min-w-0 flex-1 bg-transparent outline-none" />
        </label>
        <div className="flex min-h-0 flex-1 pt-px">
            <ul className="-mb-1 grid min-w-0 flex-1 auto-rows-fr">
                <li className="flex min-h-0 items-center overflow-hidden pl-[4px]">
                    <Icon name="part" />
                    <span className="ml-1 whitespace-nowrap">w13-molding-2 (Default) &lt;&lt;Defaul</span>
                </li>
                {tree.map((item) => <TreeItem key={item.label} item={item} />)}
            </ul>
            <div className="mr-[2px] flex w-4 shrink-0 flex-col bg-[#f0f0f0]">
                <svg viewBox="0 0 16 18" className="h-[18px] w-4 shrink-0" fill="none" stroke="#444" strokeWidth="1.800" aria-hidden="true"><path d="M4 12l4-4 4 4" /></svg>
                <div className="h-[63%] bg-[#cdcdcd]"></div>
                <svg viewBox="0 0 16 6" className="mt-auto h-[6px] w-4 shrink-0" fill="none" stroke="#444" strokeWidth="1.800" aria-hidden="true"><path d="M4 1l4 4 4-4" /></svg>
            </div>
        </div>
    </aside>
);

const stripTools = ["stamp", "spray", null, "stampPlus", "clip", "tray", "nodes", "loop"];

const ToolStrip = () => (
    <div className="flex w-[16px] shrink-0 flex-col overflow-hidden bg-[#f7f7f7]">
        <div className="mt-1 border-t-2 border-dotted border-[#b5b5b5]"></div>
        <div className="mt-4 flex flex-col items-end gap-2 border-b border-[#aaa] pr-1.5 pb-[12px]">
            {stripTools.map((name, i) => (
                <svg key={i} viewBox="0 0 20 20" className="size-5 shrink-0 overflow-visible" fill="none" stroke={name ? "#c6c6c6" : "#444"} strokeWidth="1.400" aria-hidden="true">
                    {name ? glyphs[name] : (
                        <>
                            <path d="M2 2h15v9H2zM13 6h2" />
                            <path d="M12 10l4 3 2-2 2 8-8-1 2-2-4-4z" fill="#2e9a1e" stroke="#2e7a1e" strokeWidth=".6" />
                        </>
                    )}
                </svg>
            ))}
        </div>
    </div>
);

const viewTools = [
    ["zoomFit", "Zoom to fit"], ["zoomArea", "Zoom to area"], ["prevView", "Previous view"], ["section", "Section view"],
    ["dynamic", "Dynamic annotation"], ["orient", "View orientation", true], ["display", "Display style", true],
    ["eye", "Hide or show items", true], ["appearance", "Edit appearance"], ["scene", "Apply scene", true], ["monitor", "View settings", true],
];

const HeadsUpBar = () => (
    <div className="relative flex h-8 items-center justify-center gap-[9px] pl-[128px]">
        {viewTools.map(([icon, label, drop]) => (
            <button key={icon} type="button" aria-label={label} className="flex items-center gap-[9px]">
                <Icon name={icon} />
                {drop && <Caret className="text-[#8a8a8a]" />}
            </button>
        ))}
        <button type="button" aria-label="Show task pane" className="absolute right-0 h-4 w-2 border border-r-0 border-[#8f9197]">
            <svg viewBox="0 0 6 10" className="h-2.5 w-1.5" aria-hidden="true"><path d="M5 1v8L1 5z" fill="#777" /></svg>
        </button>
    </div>
);

// The solid body, drawn in window coordinates
const Model = () => (
    <svg viewBox="269 129 1651 951" preserveAspectRatio="xMidYMid slice" className="absolute inset-0 size-full" role="img" aria-label="Star shaped part">
        <defs>
            <linearGradient id="armLeft" gradientUnits="userSpaceOnUse" x1="720" y1="728" x2="722" y2="757">
                <stop offset="0" stopColor="#50525d" />
                <stop offset=".3" stopColor="#5c5e6b" />
                <stop offset="1" stopColor="#868a9f" />
            </linearGradient>
            <linearGradient id="armRight" gradientUnits="userSpaceOnUse" x1="1460" y1="700" x2="1461" y2="730">
                <stop offset="0" stopColor="#50525d" />
                <stop offset=".3" stopColor="#5c5e6b" />
                <stop offset="1" stopColor="#85889b" />
            </linearGradient>
            <linearGradient id="armBack" gradientUnits="userSpaceOnUse" x1="695" y1="592" x2="681" y2="620">
                <stop offset="0" stopColor="#50525d" />
                <stop offset=".25" stopColor="#5c5e6b" />
                <stop offset=".8" stopColor="#8a8da3" />
                <stop offset="1" stopColor="#7e8196" />
            </linearGradient>
            <linearGradient id="armFront" gradientUnits="userSpaceOnUse" x1="1063" y1="776" x2="1048" y2="804">
                <stop offset="0" stopColor="#50525d" />
                <stop offset=".25" stopColor="#5c5e6b" />
                <stop offset=".85" stopColor="#878a9e" />
                <stop offset="1" stopColor="#777a8c" />
            </linearGradient>
            <linearGradient id="armEdge" gradientUnits="userSpaceOnUse" x1="1299" y1="565" x2="1316" y2="575">
                <stop offset="0" stopColor="#50525d" />
                <stop offset="1" stopColor="#777a8b" />
            </linearGradient>
            <linearGradient id="frontEdge" gradientUnits="userSpaceOnUse" x1="1202" y1="770" x2="1213" y2="773">
                <stop offset="0" stopColor="#50525d" />
                <stop offset="1" stopColor="#777a8b" />
            </linearGradient>
            <linearGradient id="under" x1="0" y1="0" x2="1" y2="0">
                <stop offset="0" stopColor="#898da2" />
                <stop offset="1" stopColor="#8d91a7" />
            </linearGradient>
            <radialGradient id="tip" cx=".4" cy=".6" r=".6">
                <stop offset="0" stopColor="#8a8da1" />
                <stop offset="1" stopColor="#646674" />
            </radialGradient>
        </defs>
        <g stroke="#15161c" strokeWidth="1.200" strokeLinejoin="round" fill="#50525d">
            {/* Back left arm */}
            <path d="M575 539C566 541 561 552 564 559Q567 566 573 567L778 658 800 668 838 656z" fill="url(#armBack)" />
            <path d="M575 539Q576 536 581 536L1055 586 1055 590 838 656z" />
            <path d="M575 539L1040 588M575 539Q569 536 564 549" fill="none" />
            {/* Back right arm */}
            <path d="M1055 587L1326 508Q1332 506 1337 509L1336 512 1260 625z" />
            <path d="M1336 512L1337 509Q1347 515 1347 524 1347 529 1343 534L1281 628 1260 625z" fill="url(#armEdge)" />
            <path d="M1066 588L1336 512" fill="none" />
            {/* Undersides */}
            <path d="M486 768L956 744 1003 768z" fill="url(#under)" />
            <path d="M1221 735L1702 722 1215 757z" fill="url(#under)" />
            {/* Front left arm */}
            <path d="M1055 587L481 738 485 741 958 716z" />
            <path d="M485 741L958 716Q952 730 956 744L486 768.500Q489 754 485 741z" fill="url(#armLeft)" />
            <path d="M485 741L481 738Q467 741 467 754 467 767 480 769L486 768.500Q489 754 485 741z" fill="url(#tip)" />
            <path d="M485 741L1050 591M480 769L1003 768" fill="none" />
            <path d="M481 738L1055 587" fill="none" strokeWidth="1.800" />
            {/* Right arm */}
            <path d="M1055 587L1701 691V695L1219 707z" />
            <path d="M1219 707L1701 695 1702 722 1222 735z" fill="url(#armRight)" />
            <path d="M1701 691Q1716 694 1716 708 1716 721 1702 723z" fill="url(#tip)" />
            <path d="M1067 591L1701 695" fill="none" />
            {/* Front arm */}
            <path d="M958 716L1050 591 1055 587 1064 591 1219 707 1182 833 1169 835z" />
            <path d="M1219 707Q1229 713 1226 725L1192 849 1182 833z" fill="url(#frontEdge)" />
            <path d="M958 716L1169 835Q1160 848 1163 860L956 744Q952 730 958 716z" fill="url(#armFront)" />
            <path d="M1051 590L1169 835M1063 591L1182 833" fill="none" />
            <ellipse cx="1176" cy="850" rx="15" ry="15.500" fill="url(#tip)" />
        </g>
        {/* Orientation triad */}
        <g strokeWidth="3.500">
            <path d="M314 1049v24" stroke="#1e6b22" />
            <path d="M309 1070h10l-5 10z" fill="#1e6b22" />
            <path d="M315 1048l-14 4" stroke="#a81d1d" />
            <path d="M292 1054l9-6 3 9z" fill="#c92020" />
            <path d="M314 1048l15 4" stroke="#1a1a9c" />
            <path d="M338 1054l-9-6-2 9z" fill="#2020c9" />
        </g>
        <g fontSize="12" fontFamily="Liberation Sans, sans-serif">
            <text x="286" y="1058" fill="#c92020">X</text>
            <text x="336" y="1058" fill="#2020a9">Z</text>
        </g>
    </svg>
);

const Viewport = () => (
    <main className="relative min-w-0 flex-1 bg-[#fdfdfe] bg-[linear-gradient(to_bottom,transparent_54%,#fdfdfe_71%),radial-gradient(ellipse_40%_100%_at_84%_46%,#d9dce8_0%,#dee2ec_30%,#e6e9f2c0_60%,transparent_100%),radial-gradient(ellipse_120%_40%_at_75%_64%,#dadfe9_0%,#dfe3ed_50%,#e9ecf4_74%,transparent_100%)]">
        <Model />
        <HeadsUpBar />
        <button type="button" aria-label="Collapse panel" className="absolute top-[469px] -left-[2px] flex h-[43px] w-[11px] items-center justify-center border border-[#9a9da3] bg-[#f4f4f6]">
            <span className="size-[6px] rounded-full border border-[#8f8f8f]"></span>
        </button>
    </main>
);

const App = () => {
    return (
        <div className="flex h-screen flex-col overflow-hidden bg-[#f7f7f7] font-['Noto_Sans','Open_Sans',sans-serif] text-xs text-[#1e1e1e]">
            <TitleBar />
            <Ribbon />
            <div className="relative flex min-h-0 flex-1">
                <div className="absolute top-0 left-0 z-10"><FeatureTabs /></div>
                <div className="flex pt-[24px]">
                    <ToolStrip />
                    <SidePanel />
                </div>
                <Viewport />
            </div>
        </div>
    );
};

export default App;
